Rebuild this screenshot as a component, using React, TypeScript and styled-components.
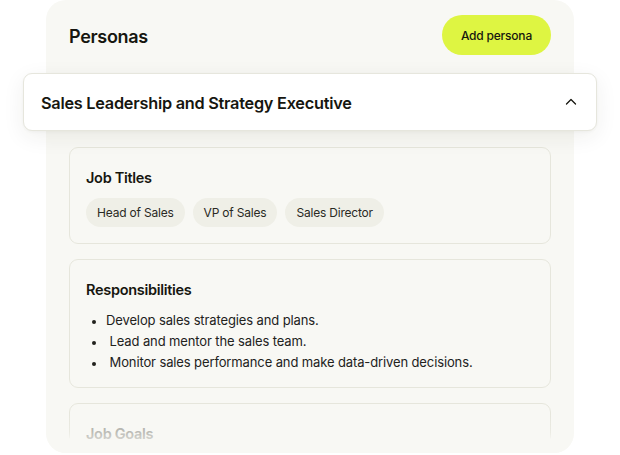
import React from 'react';
import styled, { createGlobalStyle } from 'styled-components';

const GlobalStyle = createGlobalStyle`
  html, body {
    margin: 0;
    padding: 0;
    background: #ffffff;
  }
  body {
    font-family: Inter, "Noto Sans", "Liberation Sans", sans-serif;
    color: #16160f;
  }
`;

const Stage = styled.div`
  width: 620px;
  height: 455px;
  display: flex;
  justify-content: center;
`;

const Panel = styled.section`
  position: relative;
  width: 528px;
  height: 453px;
  background: #f8f8f4;
  border-radius: 20px;
  padding: 15px 23px 0;
  box-sizing: border-box;
  display: flex;
  flex-direction: column;
`;

const TopBar = styled.div`
  display: flex;
  align-items: center;
  justify-content: space-between;
  height: 40px;
  margin-bottom: 18px;
`;

const Title = styled.h1`
  margin: 0;
  font-size: 18px;
  font-weight: 600;
  letter-spacing: -0.3px;
  position: relative;
  top: 1px;
`;

const AddButton = styled.button`
  height: 40px;
  padding: 0 19px;
  border: none;
  border-radius: 20px;
  background: #def542;
  color: #16160f;
  font-family: inherit;
  font-size: 12px;
  font-weight: 500;
  letter-spacing: -0.2px;
  cursor: pointer;
`;

const AccordionHeader = styled.div`
  display: flex;
  align-items: center;
  justify-content: space-between;
  height: 58px;
  margin: 0 -46px 16px;
  padding: 0 18px 0 17px;
  background: #ffffff;
  border: 1px solid #e6e6dd;
  border-radius: 9px;
  box-shadow: 0 6px 22px rgba(40, 40, 20, 0.07), 0 1px 3px rgba(40, 40, 20, 0.04);
  box-sizing: border-box;
  position: relative;
  z-index: 1;
`;

const HeaderText = styled.span`
  font-size: 16.3px;
  font-weight: 600;
  letter-spacing: -0.25px;
  position: relative;
  top: 1px;
`;

const Body = styled.div`
  display: flex;
  flex-direction: column;
  gap: 15px;
  overflow: hidden;
  flex: 1;
  border-radius: 0 0 20px 20px;
`;

const Card = styled.div<{ $height?: number }>`
  border: 1px solid #e6e6dc;
  border-radius: 9px;
  padding: 21px 16px 16px;
  box-sizing: border-box;
  flex-shrink: 0;
  ${({ $height }) => ($height ? `height: ${$height}px;` : '')}
`;

const CardTitle = styled.h2<{ $faded?: boolean }>`
  margin: 0;
  font-size: 14.5px;
  font-weight: 600;
  letter-spacing: -0.3px;
  color: ${({ $faded }) => ($faded ? '#a5a59e' : '#16160f')};
`;

const Chips = styled.div`
  display: flex;
  gap: 8px;
  margin-top: 12px;
`;

const Chip = styled.span`
  height: 29px;
  padding: 0 11px;
  display: inline-flex;
  align-items: center;
  border-radius: 15px;
  background: #efefe7;
  font-size: 12px;
  letter-spacing: -0.2px;
  color: #2a2a24;
`;

const List = styled.ul`
  margin: 12px 0 0;
  padding: 0 0 0 20px;
  font-size: 13px;
  letter-spacing: -0.12px;
  color: #22221c;
  li {
    line-height: 21px;
  }
  li::marker {
    font-size: 11px;
  }
`;

const Fade = styled.div`
  position: absolute;
  left: 0;
  right: 0;
  bottom: 0;
  height: 40px;
  border-radius: 0 0 20px 20px;
  background: linear-gradient(to bottom, rgba(248, 248, 244, 0), rgba(248, 248, 244, 0.25) 45%, #f8f8f4);
  pointer-events: none;
`;

const Chevron = () => (
  <svg width="14" height="14" viewBox="0 0 14 14" fill="none">
    <path d="M2.5 9L7 4.5L11.5 9" stroke="#16160f" strokeWidth="1.3" strokeLinecap="round" strokeLinejoin="round" />
  </svg>
);

const jobTitles = ['Head of Sales', 'VP of Sales', 'Sales Director'];
const responsibilities = [
  'Develop sales strategies and plans.',
  '\u00a0Lead and mentor the sales team.',
  '\u00a0Monitor sales performance and make data-driven decisions.',
];

export default function App() {
  return (
    <>
      <GlobalStyle />
      <Stage>
        <Panel>
          <TopBar>
            <Title>Personas</Title>
            <AddButton>Add persona</AddButton>
          </TopBar>
          <AccordionHeader>
            <HeaderText>Sales Leadership and Strategy Executive</HeaderText>
            <Chevron />
          </AccordionHeader>
          <Body>
            <Card $height={97}>
              <CardTitle>Job Titles</CardTitle>
              <Chips>
                {jobTitles.map((t) => (
                  <Chip key={t}>{t}</Chip>
                ))}
              </Chips>
            </Card>
            <Card $height={129}>
              <CardTitle>Responsibilities</CardTitle>
              <List>
                {responsibilities.map((r) => (
                  <li key={r}>{r}</li>
                ))}
              </List>
            </Card>
            <Card $height={120}>
              <CardTitle $faded>Job Goals</CardTitle>
            </Card>
          </Body>
          <Fade />
        </Panel>
      </Stage>
    </>
  );
}
